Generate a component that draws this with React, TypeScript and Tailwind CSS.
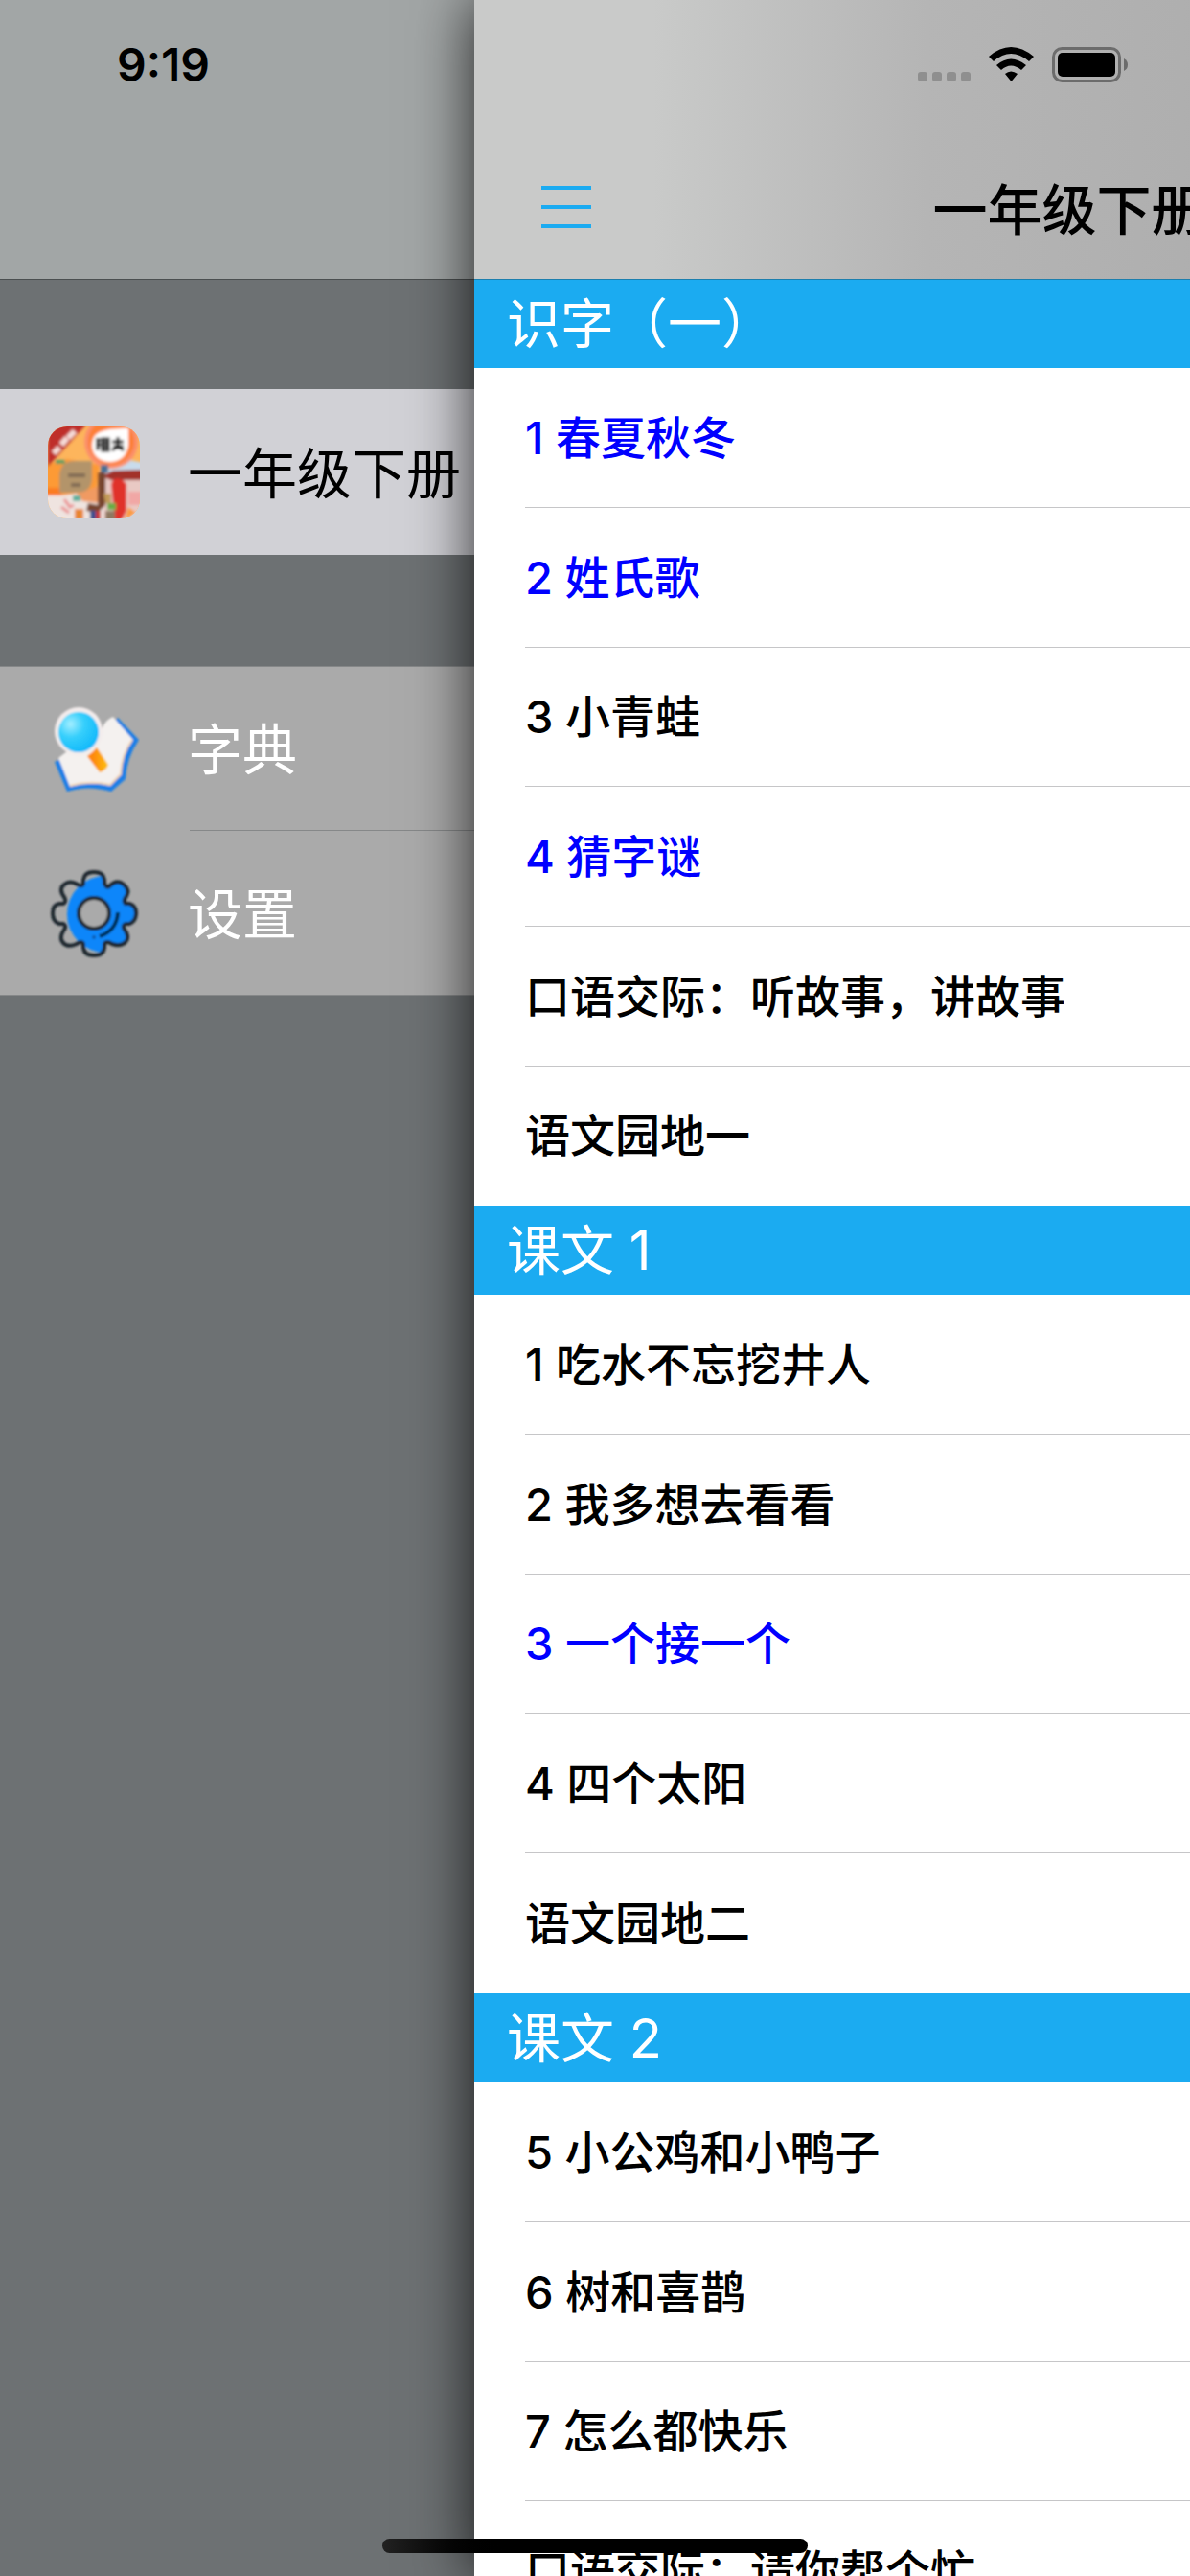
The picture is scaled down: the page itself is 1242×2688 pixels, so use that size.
type Lesson = { title: string; read?: boolean };
type Unit = { name: string; lessons: Lesson[] };

const units: Unit[] = [
    {
        name: "识字（一）",
        lessons: [
            { title: "1 春夏秋冬", read: true },
            { title: "2 姓氏歌", read: true },
            { title: "3 小青蛙" },
            { title: "4 猜字谜", read: true },
            { title: "口语交际：听故事，讲故事" },
            { title: "语文园地一" },
        ],
    },
    {
        name: "课文 1",
        lessons: [
            { title: "1 吃水不忘挖井人" },
            { title: "2 我多想去看看" },
            { title: "3 一个接一个", read: true },
            { title: "4 四个太阳" },
            { title: "语文园地二" },
        ],
    },
    {
        name: "课文 2",
        lessons: [
            { title: "5 小公鸡和小鸭子" },
            { title: "6 树和喜鹊" },
            { title: "7 怎么都快乐" },
            { title: "口语交际：请你帮个忙" },
        ],
    },
];

function BookIcon() {
    return (
        <svg viewBox="0 0 96 96" className="size-24 shrink-0" aria-hidden="true">
            <defs>
                <clipPath id="book-clip">
                    <rect width="96" height="96" rx="20" />
                </clipPath>
                <filter id="book-soft" x="-5%" y="-5%" width="110%" height="110%">
                    <feGaussianBlur stdDeviation="1.6" />
                </filter>
            </defs>
            <g clipPath="url(#book-clip)">
                <rect width="96" height="96" fill="#fdb55c" />
                <g filter="url(#book-soft)">
                    <path d="M-4 40 20 34 54 40 50 66 20 74 -4 74z" fill="#fd9a35" />
                    <path d="M-4 64H14V74H-4z" fill="#fb7c20" />
                    <path d="M-4 72 14 72 44 68 60 76V100H-4z" fill="#efe4e0" />
                    <path d="M30 70 54 62V80L36 78z" fill="#f09a62" />
                    <path d="M80 34 100 38V56H56V44z" fill="#c9dcec" />
                    <path d="M58 54H100V100H58z" fill="#e9c9c4" />
                    <circle cx="66" cy="16" r="28" fill="#fb8f6c" />
                    <circle cx="66" cy="16" r="24" fill="#fd7f35" />
                    <path d="M46 20C46 6 56 2 84 2V20C82 32 74 37 65 37 54 37 46 30 46 20z" fill="#fff" />
                    <g stroke="#111" strokeWidth="3" fill="none">
                        <path d="M50 14h5M50 19h5M52 12v13M57 13h6v12h-6zM57 17h6M57 21h6M67 16h12M68 21h11M73 11v13M67 25l5-4M74 21l5 4" />
                    </g>
                    <path d="M0 -4H42L0 42z" fill="#bf2f2c" />
                    <path d="M6 28l6-6M14 19l6-7M21 12l7-7" stroke="#f6dcd8" strokeWidth="6" />
                    <path d="M8 35h10v4H8z" fill="#5b9c63" />
                    <path d="M12 52C12 42 18 36 27 36H46V54C46 64 40 69 30 69H12z" fill="#b3946a" />
                    <path d="M21 51h18M24 61h10" stroke="#806a52" strokeWidth="4" />
                    <path d="M55 40h8v8h-8z" fill="#4b6f94" />
                    <path d="M56 52 68 46 100 45V56L66 56z" fill="#a2312b" />
                    <path d="M52 48h8v34l-8 8-12-2 2-8 10 2z" fill="#77452e" />
                    <path d="M66 60C68 52 76 52 82 60V88L76 100H70z" fill="#e0332a" />
                    <path d="M84 68h14v14H84z" fill="#f1a7a5" />
                    <path d="M58 70h8v10h-6z" fill="#c29a58" />
                    <path d="M62 80h9v7h-9z" fill="#67ad45" />
                    <path d="M26 72h8v6h-8z" fill="#5bb09c" />
                    <path d="M17 76l6 8 4-2M14 84l8 6" stroke="#ea9091" strokeWidth="3" fill="none" />
                    <path d="M28 86h9v12h-9z" fill="#e8852f" />
                    <path d="M44 88h8v12h-8z" fill="#37508f" />
                    <path d="M50 88h5v12h-5z" fill="#c7352f" />
                    <path d="M60 88h10v12H60z" fill="#8e7860" />
                    <path d="M84 84l8 6-12 8z" fill="#fb9b3d" />
                </g>
            </g>
        </svg>
    );
}

function DictionaryIcon() {
    return (
        <svg viewBox="0 0 96 96" className="size-24 shrink-0" aria-hidden="true">
            <defs>
                <radialGradient id="lens" cx="0.3" cy="0.3" r="0.75">
                    <stop offset="0" stopColor="#a4eeff" />
                    <stop offset="0.45" stopColor="#36cffc" />
                    <stop offset="1" stopColor="#12b9fb" />
                </radialGradient>
                <linearGradient id="handle" x1="0" y1="0" x2="1" y2="0">
                    <stop offset="0.3" stopColor="#fd8a0a" />
                    <stop offset="1" stopColor="#fdc210" />
                </linearGradient>
                <filter id="dict-soft" x="-10%" y="-10%" width="120%" height="120%">
                    <feGaussianBlur stdDeviation="0.9" />
                </filter>
            </defs>
            <g filter="url(#dict-soft)">
                <path d="M7 62 20 93Q42 86 66 93L81 80Q82 58 95 39L73 16 54 32 24 54z" fill="#1c7fe6" />
                <path d="M11 58 23 88Q44 82 65 87L76 76Q77 55 89 39L68 15Q60 18 56 28L24 48z" fill="#f4f1ef" />
                <path d="M23 87Q44 81 65 86L76 75Q77 54 88 39" stroke="#efcfb0" strokeWidth="2" fill="none" />
                <circle cx="32" cy="30" r="25" fill="#f3ecec" />
                <circle cx="32" cy="31" r="21" fill="url(#lens)" />
                <path d="M41 56Q46 53 51 47L63 65Q61 71 54 73z" fill="url(#handle)" />
            </g>
        </svg>
    );
}

function SettingsIcon() {
    const gear =
        "M37 17V13Q38 5 48 5T59 13V17Q61 22 64 20 72 12 79 18T82 30Q78 35 81 38H85Q92 40 92 48T85 59H81Q77 61 80 65 86 73 81 78T67 80Q61 76 59 80V84Q58 92 48 92T37 84V80Q35 76 30 80 21 84 16 79T17 65Q20 61 16 59H12Q5 57 5 48T12 38H16Q20 36 17 31 11 23 17 18T31 18Q36 21 37 17z";
    return (
        <svg viewBox="0 0 96 96" className="size-24 shrink-0" aria-hidden="true">
            <defs>
                <clipPath id="gear-clip">
                    <path d={gear} />
                </clipPath>
                <filter id="gear-soft" x="-5%" y="-5%" width="110%" height="110%">
                    <feGaussianBlur stdDeviation="0.8" />
                </filter>
            </defs>
            <g filter="url(#gear-soft)">
                <circle cx="60" cy="49" r="40" fill="#0c86fa" clipPath="url(#gear-clip)" />
                <path d={gear} fill="none" stroke="#1c262e" strokeWidth="4" />
                <circle cx="48" cy="48" r="16" fill="#aaaaaa" stroke="#1c262e" strokeWidth="4" />
                <path d="M73 47Q72 66 54 72" fill="none" stroke="#06294f" strokeWidth="4" />
                <circle cx="48" cy="73" r="2" fill="#0b5cae" />
            </g>
        </svg>
    );
}

function StatusBar() {
    return (
        <div className="absolute inset-x-0 top-0 z-20 flex items-start justify-between pt-9 pr-16 pl-[122px]">
            <span className="text-[48px] leading-16 font-semibold">9:19</span>
            <svg viewBox="0 0 220 38" className="mt-3 h-[38px] w-[220px]" aria-label="Wi-Fi, 电池">
                <g fill="#8f8f8f">
                    <rect x="0" y="27" width="10" height="10" rx="3" />
                    <rect x="15" y="27" width="10" height="10" rx="3" />
                    <rect x="30" y="27" width="10" height="10" rx="3" />
                    <rect x="45" y="27" width="10" height="10" rx="3" />
                </g>
                <path d="M74 11Q97 -9 121 11L116 16Q97 0 79 16z" />
                <path d="M82 20Q97 7 113 20L108 25Q97 16 87 25z" />
                <path d="M91 29Q97 24 104 29L97.500 37z" />
                <rect x="141.500" y="2.500" width="69" height="34" rx="9" fill="none" stroke="#6c6c6c" strokeWidth="3" />
                <rect x="146" y="7" width="60" height="25" rx="5" />
                <path d="M215 13Q219 15 219 19.500T215 26z" fill="#6c6c6c" />
            </svg>
        </div>
    );
}

function Sidebar() {
    return (
        <aside className="w-[495px] shrink-0 bg-[#6d7173] text-[57px] leading-[80px]">
            <div className="h-[292px] border-b border-[#4b4f50] bg-[#a2a6a6]" />
            <nav className="whitespace-nowrap">
                <button className="mt-[114px] flex h-[173px] w-full items-center gap-[50px] bg-[#d1d1d6] pl-[50px] text-left">
                    <BookIcon />
                    <span className="pt-1">一年级下册</span>
                </button>
                <div className="mt-[116px] border-y border-[#868889] bg-[#aaaaaa] text-white">
                    <button className="flex h-[170px] w-full items-center gap-[50px] pl-[50px] text-left">
                        <DictionaryIcon />
                        <span className="pt-1">字典</span>
                    </button>
                    <div className="ml-[198px] h-px bg-[#868889]" />
                    <button className="flex h-[171px] w-full items-center gap-[50px] pl-[50px] text-left">
                        <SettingsIcon />
                        <span className="pt-1">设置</span>
                    </button>
                </div>
            </nav>
        </aside>
    );
}

function UnitSection({ unit }: { unit: Unit }) {
    return (
        <section>
            <h2 className="flex h-[93px] items-center bg-[#1babf1] pl-[34px] text-[56px] leading-[80px] text-white">
                {unit.name}
            </h2>
            <ul className="pl-[53px]">
                {unit.lessons.map(lesson => (
                    <li
                        key={lesson.title}
                        className="h-[146px] border-b border-[#c6c6c8] last:border-transparent nth-[3n]:h-[145px]"
                    >
                        <button
                            className={`size-full text-left text-[47px] leading-16 font-medium ${lesson.read ? "text-[#0000ff]" : "text-black"}`}
                        >
                            {lesson.title}
                        </button>
                    </li>
                ))}
            </ul>
        </section>
    );
}

export default function App() {
    return (
        <div className="relative flex h-screen overflow-hidden font-['Inter','Noto_Sans_CJK_SC',sans-serif] text-black">
            <StatusBar />
            <Sidebar />

            {/* Full-width page, pushed aside while the drawer is open */}
            <main className="relative z-10 w-screen shrink-0 bg-white shadow-[0_0_60px_rgba(0,0,0,0.8)]">
                <header className="relative grid h-[291px] grid-cols-[1fr_auto_1fr] items-end bg-linear-to-r from-[#c9cac9] from-15% via-[#b5b5b5] via-38% to-[#acacac] to-70% pb-[31px] shadow-[0_1px_0_#1c7fae]">
                    <button aria-label="菜单" className="ml-[70px] flex w-[52px] flex-col gap-4 pb-[22px]">
                        <span className="h-1 w-full bg-[#1babf1]" />
                        <span className="h-1 w-full bg-[#1babf1]" />
                        <span className="h-1 w-full bg-[#1babf1]" />
                    </button>
                    <h1 className="text-[57px] leading-[80px] font-medium">一年级下册</h1>
                </header>
                {units.map(unit => (
                    <UnitSection key={unit.name} unit={unit} />
                ))}
            </main>

            <div className="absolute bottom-6 left-1/2 z-20 h-[15px] w-[444px] -translate-x-1/2 rounded-full bg-linear-to-r from-[#222222] to-black to-30%" />
        </div>
    );
}
